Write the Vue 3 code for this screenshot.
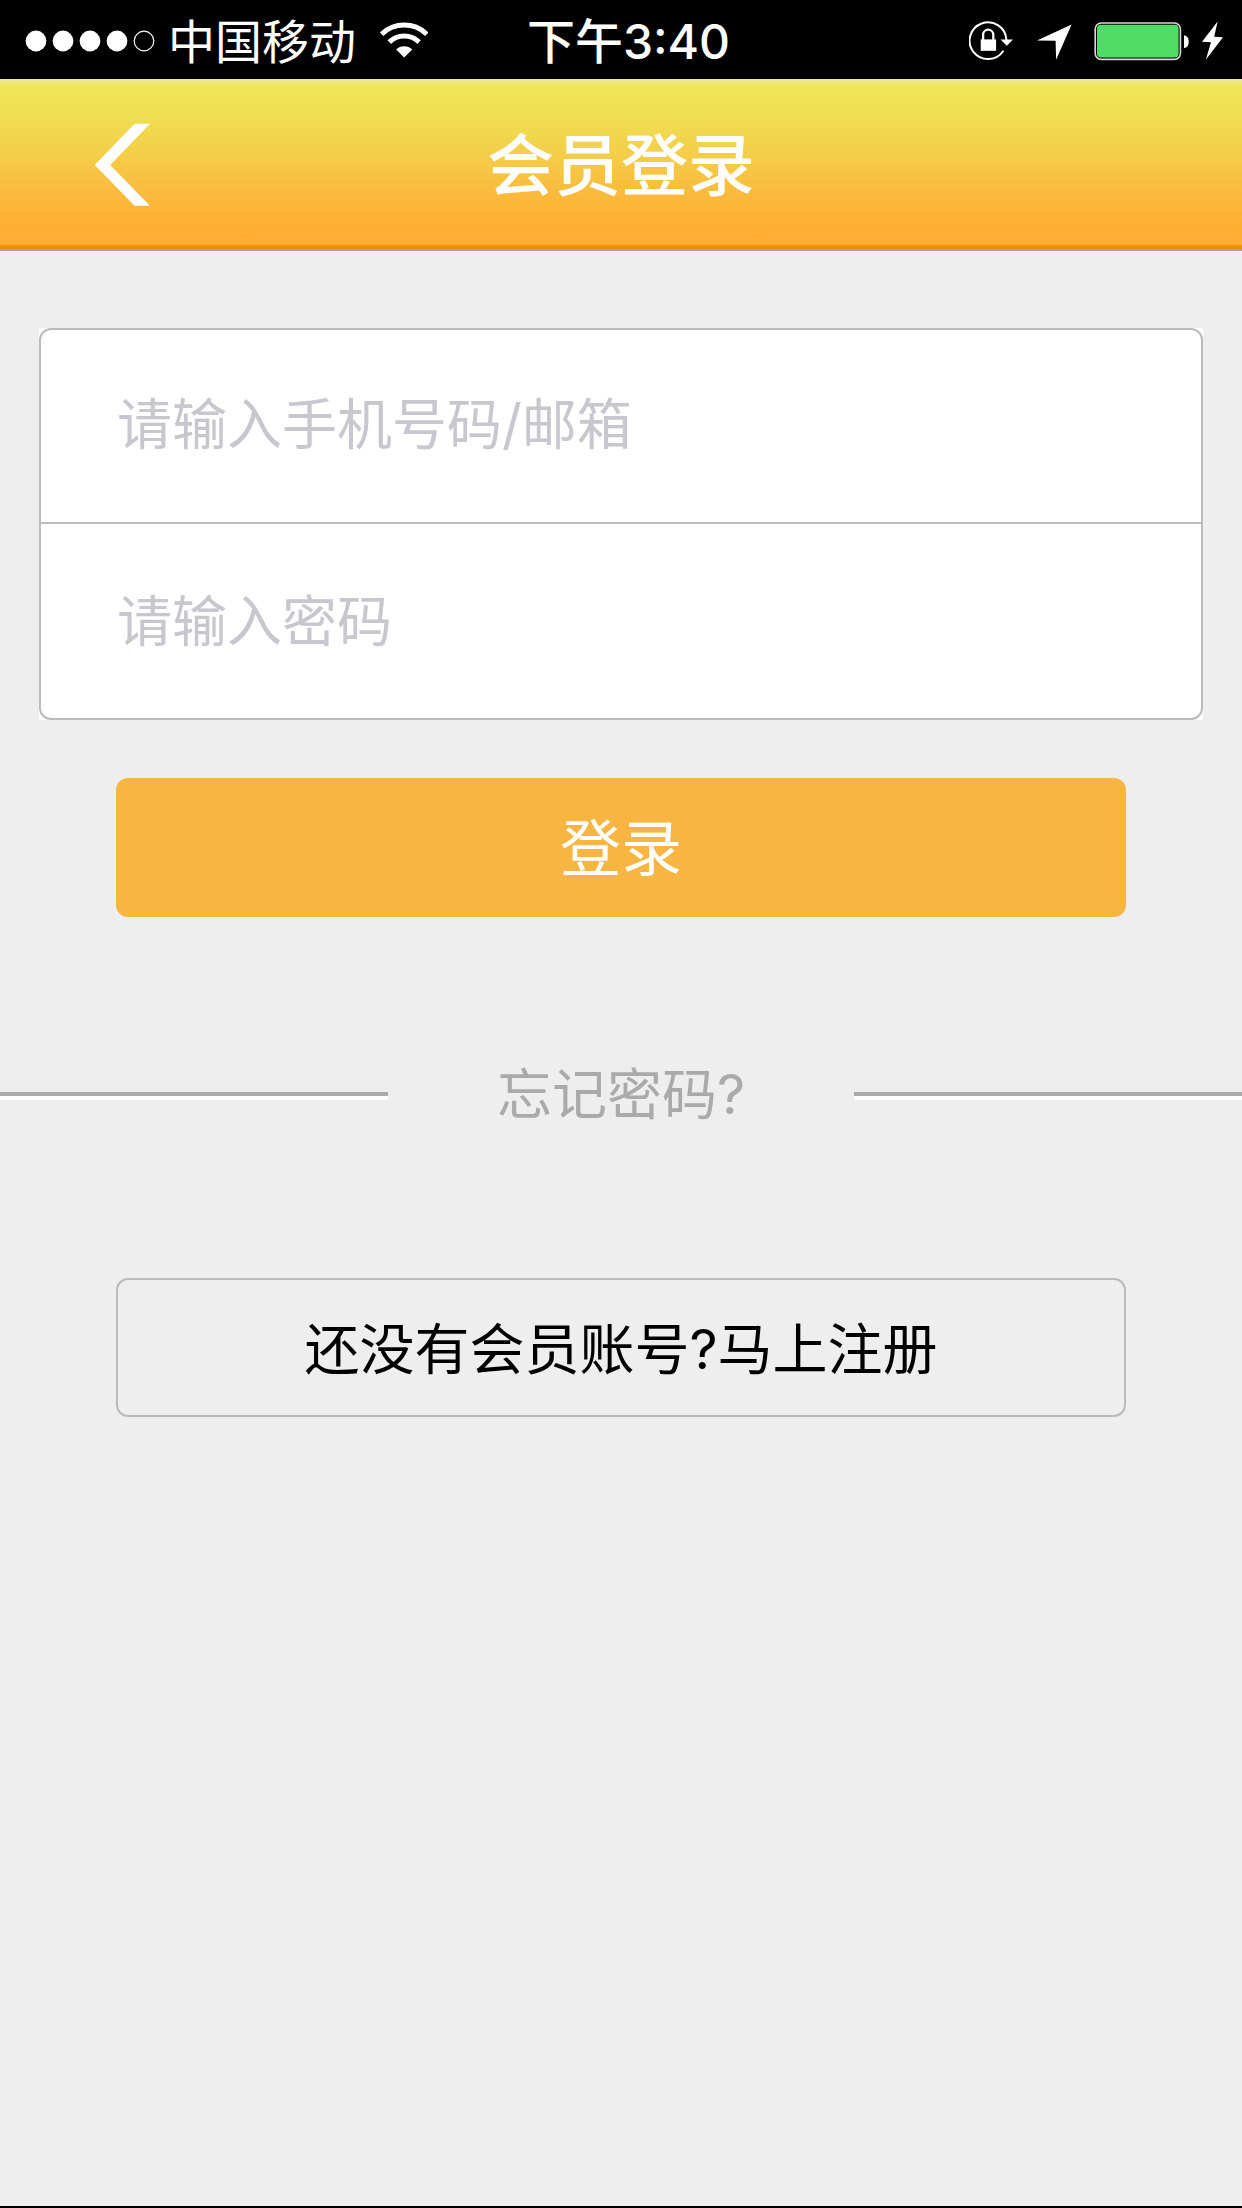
<script setup>
import { ref } from 'vue'

const account = ref('')
const password = ref('')
const signalDots = [11, 38, 65, 92]
</script>

<template>
  <div class="page">
    <div class="status">
      <div class="status-left">
        <svg class="signal" width="131" height="22" viewBox="0 0 131 22">
          <circle v-for="x in signalDots" :key="x" :cx="x" cy="11" r="10.4" fill="#fff" />
          <circle cx="119" cy="11" r="9.8" fill="none" stroke="#fff" stroke-width="1.2" />
        </svg>
        <span class="carrier">中国移动</span>
        <svg class="wifi" width="48" height="38" viewBox="0 0 48 38">
          <g fill="none" stroke="#fff" stroke-width="5">
            <path d="M1.6 12.2A32.5 32.5 0 0 1 46.8 12.2" />
            <path d="M9.3 20.1A21.4 21.4 0 0 1 39.1 20.1" />
          </g>
          <path d="M24.2 35.6L16.2 27.5A11.5 11.5 0 0 1 32.2 27.5Z" fill="#fff" />
        </svg>
      </div>
      <span class="time">下午3:40</span>
      <div class="status-right">
        <svg width="44" height="40" viewBox="0 0 44 40">
          <path d="M37.4 19A18.4 18.4 0 1 0 34.4 29.8" fill="none" stroke="#fff" stroke-width="2" />
          <path d="M31.5 18.5H44L37.8 24.7Z" fill="#fff" />
          <rect x="11.7" y="18.4" width="15.4" height="11.4" fill="#fff" />
          <path d="M14.1 19V13.8A5.1 5.1 0 0 1 24.3 13.8V19" fill="none" stroke="#fff" stroke-width="2.3" />
        </svg>
        <svg class="locate" width="35" height="40" viewBox="0 0 35 40">
          <path d="M0 19.4L34.6 3.6L19.1 38.8L18.6 19.7Z" fill="#fff" />
        </svg>
        <svg class="battery" width="96" height="40" viewBox="0 0 96 40">
          <rect x="1.2" y="2" width="85.2" height="36.4" rx="6" fill="none" stroke="#d8d8d8" stroke-width="1.6" />
          <rect x="3" y="3.8" width="81.6" height="32.8" rx="4" fill="#4fdb66" />
          <path d="M90 14.3A5.4 6.4 0 0 1 90 27Z" fill="#fff" />
        </svg>
        <svg class="bolt" width="30" height="40" viewBox="0 0 30 40">
          <path d="M15.6 .6L0 20.8L9 21.2L3.8 38.8L21 16.2L12.2 15.8Z" fill="#fff" />
        </svg>
      </div>
    </div>

    <header class="header">
      <button class="back" type="button" aria-label="返回">
        <svg width="56" height="84" viewBox="0 0 56 84">
          <path d="M40.6 .7H56L16.2 42L56 82.8H40.6L.7 42Z" fill="#fff" />
        </svg>
      </button>
      <h1 class="title">会员登录</h1>
    </header>

    <main class="content">
      <form @submit.prevent>
        <div class="card">
          <div class="fields">
            <input v-model="account" class="field account" type="text" placeholder="请输入手机号码/邮箱" aria-label="请输入手机号码/邮箱" />
            <input v-model="password" class="field password" type="password" placeholder="请输入密码" aria-label="请输入密码" />
          </div>
        </div>
        <button class="wide login" type="submit">登录</button>
      </form>
      <div class="forgot">
        <span class="rule"></span>
        <a class="forgot-link" href="#">忘记密码?</a>
        <span class="rule"></span>
      </div>
      <button class="wide register" type="button">还没有会员账号?马上注册</button>
    </main>
  </div>
</template>

<style>
body {
  margin: 0;
  background: #eee;
}
</style>

<style scoped>
.page,
.page * {
  box-sizing: border-box;
}

.page {
  min-height: 100vh;
  border-bottom: 2px solid #000;
  background: #eee;
  font-family: Inter, "Noto Sans CJK SC", sans-serif;
}

svg {
  display: block;
  flex: none;
}

.status {
  display: grid;
  grid-template-columns: 1fr auto 1fr;
  align-items: center;
  height: 79px;
  padding: 2px 10px 0 25px;
  background: #000;
  color: #fff;
  font-size: 47px;
  line-height: 56px;
  white-space: nowrap;
}

.status-left,
.status-right {
  display: flex;
  align-items: center;
}

.status-right {
  justify-content: flex-end;
}

.carrier {
  margin-left: 12px;
  padding-top: 2px;
}

.wifi {
  margin-left: 24px;
}

.time {
  padding-top: 2px;
  font-size: 48px;
  font-weight: 500;
}

.locate {
  margin-left: 24px;
}

.battery {
  margin-left: 22px;
}

.bolt {
  margin-left: 12px;
}

.header {
  display: grid;
  grid-template-columns: 1fr auto 1fr;
  align-items: center;
  height: 172px;
  padding-top: 1px;
  border-bottom: 1px solid #a8a8a8;
  background: linear-gradient(
    #ede98f 0,
    #ede88a 3px,
    #ede556 6px,
    #efdf52 36px,
    #f4cf4a 72px,
    #fabb3c 112px,
    #fdb033 145px,
    #ffae33 165px,
    #ef9203 167px,
    #ef8f00 171px
  );
}

.back {
  justify-self: start;
  margin-left: 94px;
  padding: 0;
  border: 0;
  background: none;
}

.title {
  margin: 0;
  padding-top: 2px;
  color: #fff;
  font-size: 67px;
  font-weight: 500;
  line-height: 80px;
}

.content {
  padding-top: 77px;
}

.card {
  margin: 0 39px;
  background: #fff;
}

.fields {
  display: flex;
  flex-direction: column;
  border: 2px solid #bbb;
  border-radius: 12px;
}

.field {
  width: 100%;
  padding: 0 76px;
  border: 0;
  background: none;
  font-family: inherit;
  font-size: 55px;
  outline: 0;
}

.account {
  height: 192px;
  padding-bottom: 4px;
}

.password {
  height: 196px;
  border-top: 2px solid #bbb;
}

.field::placeholder {
  color: #c8c7ce;
  opacity: 1;
}

.wide {
  display: block;
  width: calc(100% - 232px);
  height: 139px;
  margin: 0 116px;
  padding: 0 0 6px;
  border-radius: 12px;
  font-family: inherit;
}

.login {
  margin-top: 58px;
  border: 0;
  background: #f8b542;
  color: #fff;
  font-size: 61px;
}

.forgot {
  display: grid;
  grid-template-columns: 5fr 6fr 5fr;
  align-items: center;
  margin: 139px 0 142px;
}

.rule {
  height: 8px;
  border-top: 4px solid #aaa;
  background: #fff;
}

.forgot-link {
  padding-bottom: 4px;
  color: #aaa;
  font-size: 55px;
  line-height: 76px;
  text-align: center;
  text-decoration: none;
}

.register {
  border: 2px solid #bbb;
  background: none;
  color: #000;
  font-size: 55px;
}
</style>
